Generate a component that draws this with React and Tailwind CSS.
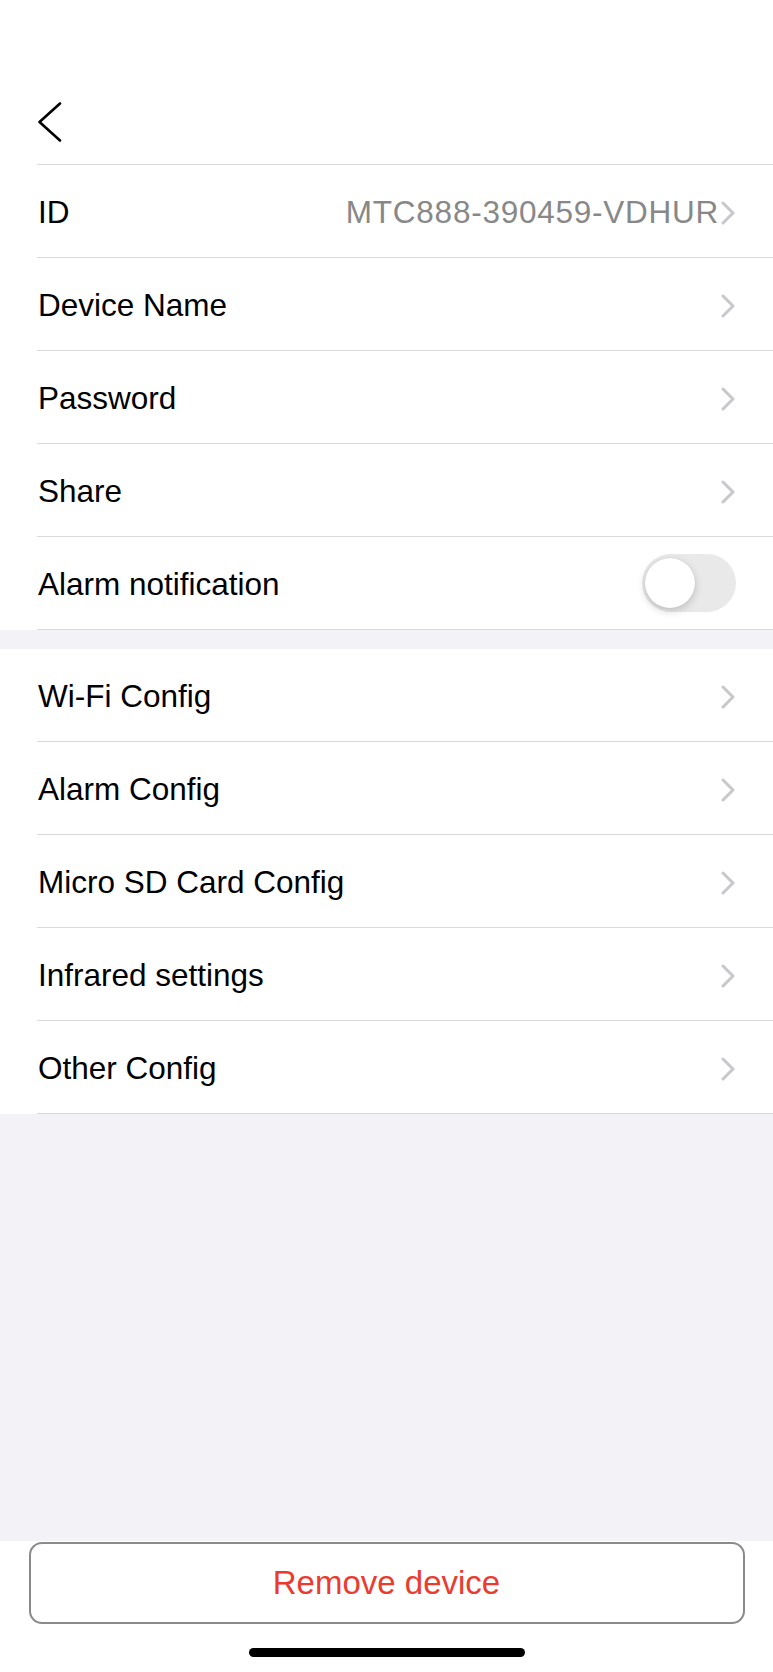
import React, { useState } from 'react';

const Chevron = () => (
  <svg width="14" height="24" viewBox="0 0 14 24" fill="none" className="shrink-0">
    <path d="M2 2l10 10L2 22" stroke="#c7c7cc" strokeWidth="3" strokeLinecap="round" strokeLinejoin="round" />
  </svg>
);

const Row = ({ label, value, children }) => (
  <div className="h-[93px] flex items-center border-b border-[#dadada] pr-[38px] pt-[3px]">
    <span className="text-[31.5px] text-black pl-[1px]">{label}</span>
    <div className="flex-1" />
    {value && <span className="text-[31.5px] text-[#888888] tracking-[0.75px] mr-[2px]">{value}</span>}
    {children || <Chevron />}
  </div>
);

const Toggle = ({ on, setOn }) => (
  <button
    onClick={() => setOn(!on)}
    className={`relative w-[94px] h-[58px] rounded-full -mr-[1px] -mt-[3px] ${on ? 'bg-[#34c759]' : 'bg-[#e9e9ea]'}`}
  >
    <span
      className={`absolute top-[4px] w-[50px] h-[50px] rounded-full bg-white shadow-[0_3px_8px_rgba(0,0,0,0.18),0_0_1px_rgba(0,0,0,0.15)] ${on ? 'left-[40px]' : 'left-[3px]'}`}
    />
  </button>
);

export default function App() {
  const [alarm, setAlarm] = useState(false);

  return (
    <div className="w-[773px] h-[1672px] flex flex-col bg-[#f2f2f7] font-['Liberation_Sans',Arial,sans-serif]">
      <div className="bg-white">
        <div className="h-[164px] flex items-end pb-[22px] pl-[37px]">
          <svg width="26" height="40" viewBox="0 0 26 40" fill="none">
            <path d="M23 1.5L2.5 20L23 38.5" stroke="#000" strokeWidth="2.6" strokeLinecap="round" strokeLinejoin="round" />
          </svg>
        </div>
        <div className="ml-[37px] border-t border-[#dadada]">
          <Row label="ID" value="MTC888-390459-VDHUR" />
          <Row label="Device Name" />
          <Row label="Password" />
          <Row label="Share" />
          <Row label="Alarm notification">
            <Toggle on={alarm} setOn={setAlarm} />
          </Row>
        </div>
      </div>

      <div className="h-[19px]" />

      <div className="bg-white">
        <div className="ml-[37px]">
          <Row label="Wi-Fi Config" />
          <Row label="Alarm Config" />
          <Row label="Micro SD Card Config" />
          <Row label="Infrared settings" />
          <Row label="Other Config" />
        </div>
      </div>

      <div className="flex-1" />

      <div className="bg-white h-[131px] flex flex-col items-center pt-[1px]">
        <button className="w-[716px] h-[82px] rounded-[13px] border-2 border-[#8a8a8a] bg-white text-[33px] text-[#eb3b2f]">
          Remove device
        </button>
        <div className="mt-[24px] w-[276px] h-[9px] rounded-full bg-black" />
      </div>
    </div>
  );
}
